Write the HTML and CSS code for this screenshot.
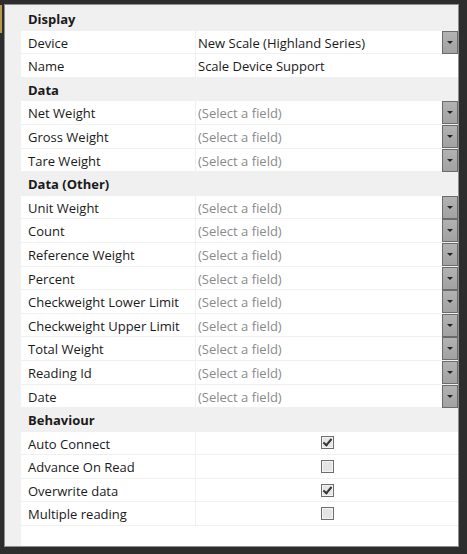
FILE: index.html
```html
<!DOCTYPE html>
<html lang="en">
<head>
    <meta charset="UTF-8">
    <title>Properties</title>
    <link rel="stylesheet" href="styles.css">
</head>
<body>
    <div class="marker"></div>
    <div class="panel">
        <div class="cat">Display</div>
        <div class="row"><span class="name">Device</span><span class="value">New Scale (Highland Series)</span><span class="drop"></span></div>
        <div class="row"><span class="name">Name</span><span class="value">Scale Device Support</span></div>

        <div class="cat">Data</div>
        <div class="row"><span class="name">Net Weight</span><span class="value empty">(Select a field)</span><span class="drop"></span></div>
        <div class="row"><span class="name">Gross Weight</span><span class="value empty">(Select a field)</span><span class="drop"></span></div>
        <div class="row"><span class="name">Tare Weight</span><span class="value empty">(Select a field)</span><span class="drop"></span></div>

        <div class="cat">Data (Other)</div>
        <div class="row"><span class="name">Unit Weight</span><span class="value empty">(Select a field)</span><span class="drop"></span></div>
        <div class="row"><span class="name">Count</span><span class="value empty">(Select a field)</span><span class="drop"></span></div>
        <div class="row"><span class="name">Reference Weight</span><span class="value empty">(Select a field)</span><span class="drop"></span></div>
        <div class="row"><span class="name">Percent</span><span class="value empty">(Select a field)</span><span class="drop"></span></div>
        <div class="row"><span class="name">Checkweight Lower Limit</span><span class="value empty">(Select a field)</span><span class="drop"></span></div>
        <div class="row"><span class="name">Checkweight Upper Limit</span><span class="value empty">(Select a field)</span><span class="drop"></span></div>
        <div class="row"><span class="name">Total Weight</span><span class="value empty">(Select a field)</span><span class="drop"></span></div>
        <div class="row"><span class="name">Reading Id</span><span class="value empty">(Select a field)</span><span class="drop"></span></div>
        <div class="row"><span class="name">Date</span><span class="value empty">(Select a field)</span><span class="drop"></span></div>

        <div class="cat">Behaviour</div>
        <div class="row"><span class="name">Auto Connect</span><span class="check on"></span></div>
        <div class="row"><span class="name">Advance On Read</span><span class="check"></span></div>
        <div class="row"><span class="name">Overwrite data</span><span class="check on"></span></div>
        <div class="row"><span class="name">Multiple reading</span><span class="check"></span></div>

        <div class="rest"></div>
    </div>
</body>
</html>
```

FILE: styles.css
```css
body{
    margin:0;
    padding:4px 8px 7px 4px;
    background:#2d2d2d;
    font-family:"Open Sans",sans-serif;
    font-size:13px;
    color:#1a1a1a;
    height:543px;
    display:flex;
    position:relative;
}
.marker{
    position:absolute;
    left:0;
    top:5px;
    width:2px;
    height:28px;
    background:#b8994a;
}
.panel{
    flex:1;
    border:1px solid #8f8f8f;
    background:#f0f0f0;
    padding-top:2px;
    display:flex;
    flex-direction:column;
}
.cat{
    height:23.6px;
    line-height:23.6px;
    padding-left:23px;
    font-weight:700;
    flex:none;
    box-sizing:border-box;
    padding-top:1px;
}
.row{
    height:23.6px;
    margin-left:16px;
    background:#fff;
    border-bottom:1px solid #f0f0f0;
    box-sizing:border-box;
    display:grid;
    grid-template-columns:175px 1fr;
    align-items:center;
    position:relative;
    flex:none;
}
.name{
    padding-left:7px;
    height:100%;
    box-sizing:border-box;
    padding-top:2px;
    line-height:20.6px;
    border-right:1px solid #f0f0f0;
    white-space:nowrap;
}
.value{
    padding-left:2px;
    padding-top:2px;
    line-height:20.6px;
    white-space:nowrap;
}
.value.empty{
    color:#8a8a8a;
}
.drop{
    position:absolute;
    right:0;
    top:0;
    width:14px;
    height:21px;
    border:1px solid #6b6b6b;
    background:linear-gradient(#b2b2b2,#a2a2a2);
}
.drop::after{
    content:'';
    position:absolute;
    left:4px;
    top:9px;
    border-left:3px solid transparent;
    border-right:3px solid transparent;
    border-top:3px solid #222;
}
.check{
    justify-self:center;
    width:11px;
    height:11px;
    border:1px solid #6e6e6e;
    background:#e4e4e4;
    box-shadow:inset 0 0 0 1px #f4f4f4;
    position:relative;
}
.check.on::after{
    content:'';
    position:absolute;
    left:3px;
    top:0;
    width:3px;
    height:7px;
    border-right:2px solid #333;
    border-bottom:2px solid #333;
    transform:rotate(40deg);
}
.rest{
    flex:1;
    margin-left:16px;
    background:#fff;
}
```
